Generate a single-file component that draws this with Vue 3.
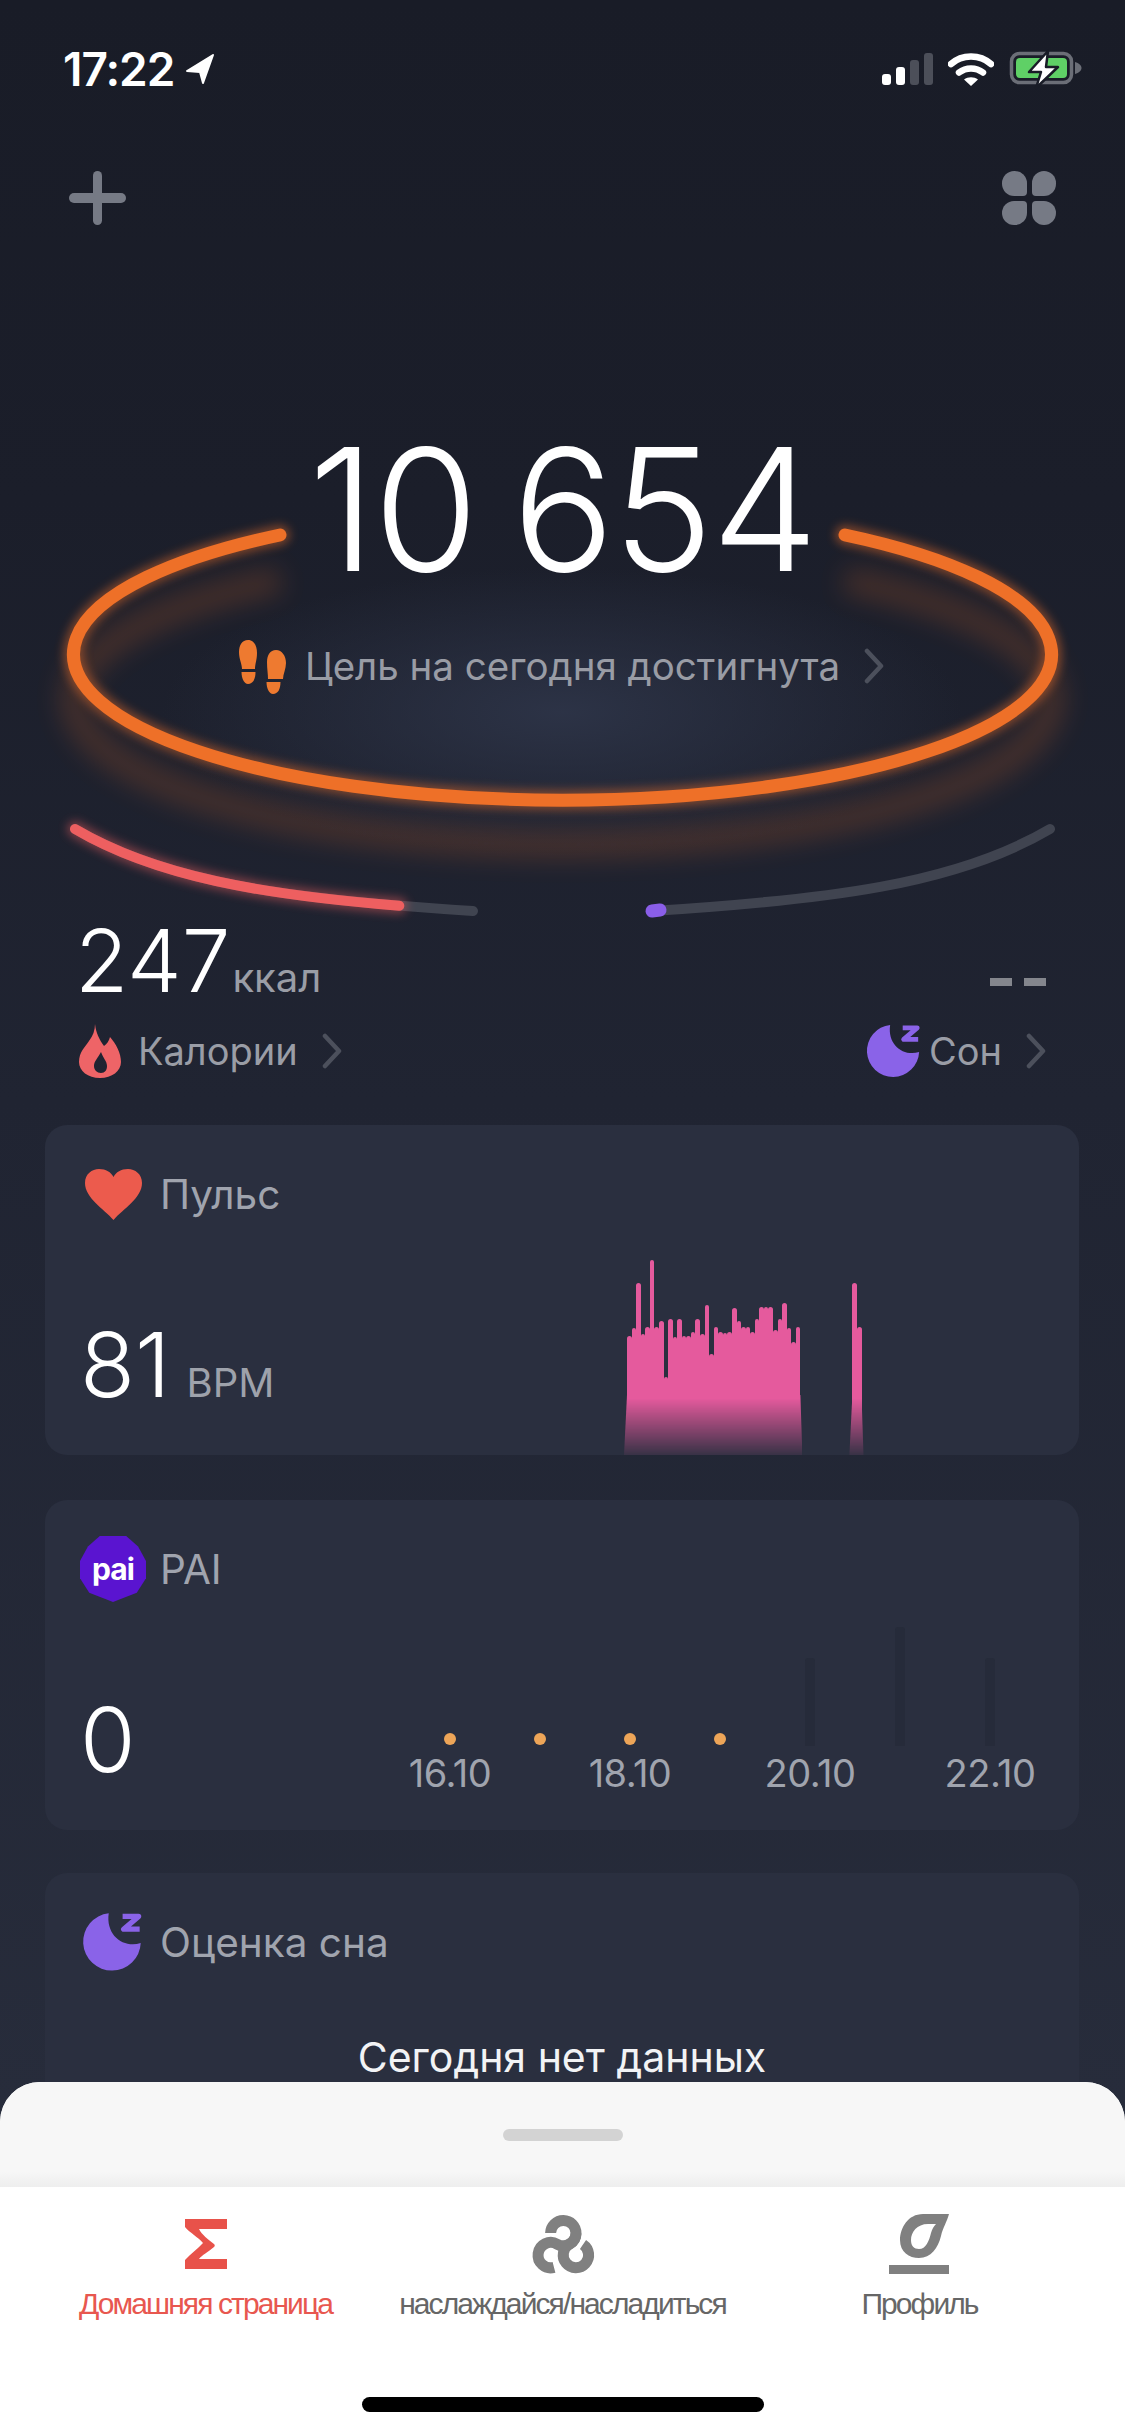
<template>
  <div class="phone">
    <div class="status">
      <div class="status-left">
        <span class="time">17:22</span>
        <svg class="loc" viewBox="0 0 30 32"><path d="M28 2 2 18l13 1 3 11z" fill="#fff" stroke="#fff" stroke-width="2" stroke-linejoin="round"/></svg>
      </div>
      <div class="status-right">
        <div class="signal">
          <i class="on" style="height:11px"></i>
          <i class="on" style="height:18px"></i>
          <i style="height:25px"></i>
          <i style="height:32px"></i>
        </div>
        <svg class="wifi" viewBox="0 0 46 34">
          <path d="M3 12C14 2 32 2 43 12" fill="none" stroke="#fff" stroke-width="6.5" stroke-linecap="round"/>
          <path d="M11 20.5C18 15 28 15 35 20.5" fill="none" stroke="#fff" stroke-width="6.5" stroke-linecap="round"/>
          <path d="M16 27.5C20 24.5 26 24.5 30 27.5L23 34z" fill="#fff"/>
        </svg>
        <svg class="battery" viewBox="1008 48 76 42">
          <rect x="1011.5" y="53.5" width="60" height="29" rx="8" fill="none" stroke="#6b6e77" stroke-width="3.5"/>
          <path d="M1075 62c4 1 6.5 3.5 6.5 6s-2.5 5-6.5 6z" fill="#6b6e77"/>
          <rect x="1016" y="58" width="51" height="20" rx="4" fill="#5fd066"/>
          <path d="m1048 51-19 21h12l-5 16 22-21h-12z" fill="#fff" stroke="#191c27" stroke-width="2.5" stroke-linejoin="round"/>
        </svg>
      </div>
    </div>

    <div class="topbar">
      <div class="plus"></div>
      <div class="clover"><span></span><span></span><span></span><span></span></div>
    </div>

    <section class="hero">
      <svg class="rings" viewBox="0 225 1125 900" width="1125" height="900">
        <defs>
          <radialGradient id="centerGlow">
            <stop offset="0" stop-color="#2e3549" stop-opacity=".9"/>
            <stop offset="1" stop-color="#2e3549" stop-opacity="0"/>
          </radialGradient>
          <filter id="blur4" x="-10%" y="-30%" width="120%" height="160%"><feGaussianBlur stdDeviation="5"/></filter>
          <filter id="blur14" x="-10%" y="-30%" width="120%" height="160%"><feGaussianBlur stdDeviation="13"/></filter>
        </defs>
        <ellipse cx="562" cy="712" rx="400" ry="145" fill="url(#centerGlow)"/>
        <path :d="ringShifted" fill="none" stroke="#ee7028" stroke-width="26" opacity=".2" filter="url(#blur14)"/>
        <path :d="ring" fill="none" stroke="#f0702a" stroke-width="20" stroke-linecap="round" opacity=".45" filter="url(#blur4)"/>
        <path :d="ring" fill="none" stroke="#ee7028" stroke-width="13" stroke-linecap="round"/>

        <path :d="leftArc" fill="none" stroke="#404450" stroke-width="10" stroke-linecap="round"/>
        <path :d="leftArc" pathLength="100" stroke-dasharray="82 200" fill="none" stroke="#ee5f60" stroke-width="16" stroke-linecap="round" opacity=".45" filter="url(#blur4)"/>
        <path :d="leftArc" pathLength="100" stroke-dasharray="82 200" fill="none" stroke="#ee5f60" stroke-width="10" stroke-linecap="round"/>
        <path :d="rightArc" fill="none" stroke="#404450" stroke-width="10" stroke-linecap="round"/>
        <path d="M652 911 660 910" fill="none" stroke="#8a5ee8" stroke-width="13" stroke-linecap="round"/>
      </svg>

      <div class="steps">10 654</div>
      <div class="goal">
        <svg class="feet" viewBox="0 0 70 70">
          <path d="M19 9c6 0 9 6 9 13s-2 11-2 16H13c0-5-3-10-3-17S13 9 19 9z" fill="#ee7a30"/>
          <path d="M12.5 41h14c0 7-2.5 12-7.5 12-4 0-6.5-6-6.5-12z" fill="#ee7a30"/>
          <path d="M47 19c6 0 10 6 10 13 0 6-3 11-3 16H39c0-5-1-10-1-17s3-12 9-12z" fill="#ee7a30"/>
          <path d="M37.5 51h14c0 7-2.5 12-7.5 12-4 0-6.500-6-6.500-12z" fill="#ee7a30"/>
        </svg>
        <span class="goal-text">Цель на сегодня достигнута</span>
        <svg class="chev" viewBox="0 0 20 36"><path d="m3 3 14 15L3 33" /></svg>
      </div>

      <div class="stats">
        <div class="stat">
          <div class="stat-val"><span class="big">247</span><span class="unit">ккал</span></div>
          <div class="stat-label stat-label-left">
            <svg class="flame" viewBox="20 2 45 56"><path fill-rule="evenodd" fill="#ee6467" d="M37 3c1 9 4 15 9 22 3-2 5-5 6-9 6 7 11 16 11 25 0 9-9 16-21 16s-21-7-21-16c0-10 6-15 10-21 4-5 6-11 6-17zM43 31c-3 6-7 9-7 14 0 4 3 7 7 7s6-3 6-7c0-5-4-8-6-14z"/></svg>
            <span>Калории</span>
            <svg class="chev" viewBox="0 0 20 36"><path d="m3 3 14 15L3 33" /></svg>
          </div>
        </div>
        <div class="stat stat-right">
          <div class="dashes"><i></i><i></i></div>
          <div class="stat-label">
            <svg class="moon" viewBox="5 6 60 60">
              <path fill="#8a63e8" d="M31 9a27 27 0 1 0 30 28C45 42 28 30 31 9z"/>
              <path fill="none" stroke="#8a63e8" stroke-width="5" stroke-linejoin="round" d="M44 12h15L45 24h15"/>
            </svg>
            <span>Сон</span>
            <svg class="chev" viewBox="0 0 20 36"><path d="m3 3 14 15L3 33" /></svg>
          </div>
        </div>
      </div>
    </section>

    <section class="cards">
      <div class="card card-pulse">
        <div class="card-head">
          <div class="card-icon">
            <svg class="heart" viewBox="0 0 59 52"><path fill="#ec5b4d" d="M29.5 52C20 41 1 30 1 15 1 6 8 1 15 1c7 0 12 3 14.5 8C32 4 37 1 44 1c7 0 14 5 14 14 0 15-19 26-28.500 37z"/></svg>
          </div>
          <span>Пульс</span>
        </div>
        <div class="card-value"><span class="big">81</span><span class="unit">BPM</span></div>
        <div class="hr-chart">
          <div class="hr-group">
            <i v-for="(top, i) in pulseMain" :key="i" :style="{ height: barHeight(top) + 'px' }"></i>
          </div>
          <div class="hr-group hr-second">
            <i v-for="(top, i) in pulseLate" :key="i" :style="{ height: barHeight(top) + 'px' }"></i>
          </div>
        </div>
      </div>

      <div class="card card-pai">
        <div class="card-head">
          <div class="card-icon"><div class="pai-badge">pai</div></div>
          <span>PAI</span>
        </div>
        <div class="card-value"><span class="big">0</span></div>
        <div class="pai-chart">
          <div v-for="col in paiDays" :key="col.id" class="pai-col">
            <div class="pai-plot">
              <i v-if="col.bar" class="pai-bar" :style="{ height: col.bar + 'px' }"></i>
              <i v-else class="pai-dot"></i>
            </div>
            <div class="pai-label">{{ col.label }}</div>
          </div>
        </div>
      </div>

      <div class="card card-sleep">
        <div class="card-head">
          <div class="card-icon">
            <svg class="moon-lg" viewBox="5 6 60 60">
              <path fill="#8a63e8" d="M31 9a27 27 0 1 0 30 28C45 42 28 30 31 9z"/>
              <path fill="none" stroke="#8a63e8" stroke-width="5" stroke-linejoin="round" d="M44 12h15L45 24h15"/>
            </svg>
          </div>
          <span>Оценка сна</span>
        </div>
        <div class="no-data">Сегодня нет данных</div>
      </div>
    </section>

    <div class="sheet">
      <div class="sheet-top"><div class="handle"></div></div>
      <nav class="tabs">
        <div class="tab active">
          <svg viewBox="185 2219 42 50" style="width:42px;height:50px"><path fill="#e8524a" d="M185 2219h42v10h-28c3 6 9 10 15 15 1 1 1 2 0 3-6 5-12 8-15 12h28v10h-42v-9c5-6 13-11 18-17-5-6-13-10-18-16z"/></svg>
          <span>Домашняя страница</span>
        </div>
        <div class="tab">
          <svg viewBox="-2 -1 80 80" style="width:80px;height:80px;margin:-10px">
            <g fill="none" stroke="#808080" stroke-width="11">
              <path d="M25.600 28A12.700 12.700 0 0 1 51 28.300 12.700 12.700 0 0 1 44.400 39.150 12.700 12.700 0 1 0 58 39.500"/>
              <path d="M29 62.400A12.700 12.700 0 1 1 32.150 39.150 12.700 12.700 0 0 0 51 28.300"/>
            </g>
          </svg>
          <span>наслаждайся/насладиться</span>
        </div>
        <div class="tab">
          <svg viewBox="891 2214 62 60" style="width:62px;height:60px">
            <path fill="#808080" fill-rule="evenodd" d="M951 2214h-26c-15 0-23 14-23 26 0 12 9 18 19 18 12 0 19-10 22-22 2-9 6-14 8-22zM930 2224c-11 0-17 8-17 16 0 6 3 9 8 9 7 0 10-8 12-16 1-4 3-7 5-9z"/>
            <rect x="891" y="2265" width="60" height="9" fill="#808080"/>
          </svg>
          <span>Профиль</span>
        </div>
      </nav>
      <div class="home-bar"></div>
    </div>
  </div>
</template>

<script setup>
const ring = 'M280 535A489 146 0 1 0 845 535'
const ringShifted = 'M280 580A489 146 0 1 0 845 580'
const leftArc = 'M75 829C170 885 300 900 473 911'
const rightArc = 'M1050 829C955 885 825 900 652 911'

// tops read off the chart, in px from the top of the card row
const pulseMain = [116, 108, 63, 114, 107, 40, 107, 101, 157, 99, 117, 99, 116, 116, 112, 99, 114, 85, 134, 107, 112, 113, 112, 88, 101, 107, 107, 112, 99, 87, 87, 87, 110, 99, 83, 108, 122, 107]
const pulseLate = [63, 107]
const barHeight = top => 235 - top

const paiDays = [
  { id: 1, label: '16.10' },
  { id: 2, label: '' },
  { id: 3, label: '18.10' },
  { id: 4, label: '' },
  { id: 5, label: '20.10', bar: 88 },
  { id: 6, bar: 119, label: '' },
  { id: 7, label: '22.10', bar: 88 }
]
</script>

<style>
html, body { margin: 0; background: #191c27; }
</style>

<style scoped>
.phone {
  width: 1125px;
  height: 2436px;
  position: relative;
  overflow: hidden;
  background: linear-gradient(180deg, #191c27 0, #1b1e2a 500px, #202432 1100px, #272c3b 2100px);
  font-family: Inter, "Liberation Sans", sans-serif;
  color: #fff;
}

.status {
  height: 62px;
  padding: 38px 41px 0 63px;
  display: flex;
  justify-content: space-between;
  align-items: center;
}
.status-left { display: flex; align-items: center; gap: 11px; }
.time { font-size: 46px; font-weight: 600; letter-spacing: -1px; line-height: 62px; }
.loc { width: 30px; height: 32px; }
.status-right { display: flex; align-items: center; gap: 15px; }
.signal { display: flex; align-items: flex-end; gap: 5px; height: 32px; }
.signal i { width: 9px; border-radius: 3px; background: #4c4f59; }
.signal i.on { background: #fff; }
.wifi { width: 46px; height: 34px; }
.battery { width: 76px; height: 42px; margin-left: -1px; }

.topbar {
  margin-top: 71px;
  padding: 0 69px;
  display: flex;
  justify-content: space-between;
}
.plus { width: 57px; height: 54px; position: relative; }
.plus::before, .plus::after { content: ""; position: absolute; background: #767a85; border-radius: 5px; }
.plus::before { left: 0; right: 0; top: 22px; height: 10px; }
.plus::after { top: 0; bottom: 0; left: 24px; width: 9px; }
.clover {
  width: 54px;
  height: 54px;
  display: grid;
  grid-template-columns: 1fr 1fr;
  gap: 5px;
}
.clover span { background: #767a85; }
.clover span:nth-child(1) { border-radius: 50% 50% 4px 50%; }
.clover span:nth-child(2) { border-radius: 50% 50% 50% 4px; }
.clover span:nth-child(3) { border-radius: 50% 4px 50% 50%; }
.clover span:nth-child(4) { border-radius: 4px 50% 50% 50%; }

.hero { height: 900px; position: relative; }
.rings { position: absolute; left: 0; top: 0; }

.steps {
  position: relative;
  padding-top: 189px;
  text-align: center;
  font-size: 170px;
  line-height: 190px;
  font-weight: 300;
  letter-spacing: -2px;
  word-spacing: -10px;
}
.goal {
  position: relative;
  margin-top: 27px;
  padding-right: 14px;
  display: flex;
  justify-content: center;
  align-items: center;
  height: 70px;
}
.feet { width: 70px; height: 70px; margin-right: 6px; margin-left: 2px; }
.goal-text { font-size: 38.5px; color: #999ca5; }
.chev { width: 20px; height: 36px; margin-left: 24px; fill: none; stroke: #4c505c; stroke-width: 4.5; stroke-linecap: round; stroke-linejoin: round; }

.stats {
  position: relative;
  margin-top: 214px;
  padding: 0 79px 0 75px;
  display: flex;
  justify-content: space-between;
}
.stat-right { display: flex; flex-direction: column; align-items: flex-end; }
.stat-val { height: 92px; display: flex; align-items: baseline; }
.big { font-size: 87px; line-height: 92px; font-weight: 300; }
.unit { font-size: 40px; color: #9a9da6; margin-left: 2px; }
.dashes { height: 92px; display: flex; gap: 12px; align-items: flex-end; padding-bottom: 21px; box-sizing: border-box; }
.dashes i { width: 22px; height: 8px; background: #84868d; }
.stat-label { display: flex; align-items: center; font-size: 38px; color: #9a9da6; height: 60px; margin-top: 14px; }
.stat-label-left { margin-left: 3px; }
.flame { width: 45px; height: 56px; margin-right: 15px; }
.moon { width: 58px; height: 58px; margin-right: 6px; }
.stat-label .chev { margin-left: 24px; }

.cards {
  position: absolute;
  left: 45px;
  right: 46px;
  top: 1125px;
  display: flex;
  flex-direction: column;
  gap: 45px;
}
.card { position: relative; background: #2a2f3f; border-radius: 22px; height: 330px; }
.card-sleep { height: 500px; margin-top: -2px; }
.card-head {
  position: absolute;
  left: 37px;
  top: 36px;
  height: 66px;
  display: flex;
  align-items: center;
  gap: 16px;
  font-size: 40.5px;
  color: #a0a4ae;
}
.card-icon { width: 62px; display: flex; justify-content: center; }
.card-icon > * { flex: none; }
.heart { width: 59px; height: 52px; }
.moon-lg { width: 64px; height: 64px; }
.card-value { position: absolute; left: 35px; bottom: 44px; display: flex; align-items: baseline; }
.card-value .big { font-size: 90px; }
.card-value .unit { margin-left: 16px; color: #9ea2ab; }

.hr-chart {
  position: absolute;
  left: 579px;
  bottom: 0;
  height: 195px;
  padding: 0 3px;
  display: flex;
  align-items: flex-end;
  -webkit-mask-image: linear-gradient(180deg, #000 71%, rgba(0,0,0,.08) 100%);
  mask-image: linear-gradient(180deg, #000 71%, rgba(0,0,0,.08) 100%);
}
.hr-group { position: relative; display: flex; align-items: flex-end; }
.hr-group::before {
  content: "";
  position: absolute;
  left: -3px;
  right: -2px;
  bottom: 0;
  height: 60px;
  background: #e55a9d;
  clip-path: polygon(3px 0, calc(100% - 2px) 0, 100% 100%, 0 100%);
}
.hr-group i { width: 4.57px; background: #e55a9d; border-radius: 3px 3px 0 0; }
.hr-second { margin-left: 52px; }

.pai-badge {
  width: 66px;
  height: 66px;
  background: #5a14d0;
  clip-path: polygon(30% 0, 70% 0, 88% 16%, 100% 38%, 100% 64%, 86% 86%, 50% 100%, 14% 86%, 0 64%, 0 38%, 12% 16%);
  display: flex;
  align-items: center;
  justify-content: center;
  color: #fff;
  font-size: 30px;
  font-weight: 700;
  letter-spacing: -1px;
}
.pai-chart { position: absolute; left: 360px; top: 126px; display: grid; grid-template-columns: repeat(7, 90px); }
.pai-col { display: flex; flex-direction: column; align-items: center; }
.pai-plot { height: 120px; display: flex; align-items: flex-end; }
.pai-bar { width: 10px; background: #262b3a; border-radius: 3px 3px 0 0; }
.pai-dot { width: 12px; height: 12px; border-radius: 50%; background: #eda558; margin-bottom: 1px; }
.pai-label { height: 52px; line-height: 52px; font-size: 38px; letter-spacing: -.5px; color: #a0a4ae; margin-top: 1px; white-space: nowrap; }

.no-data { position: absolute; top: 154px; left: 0; right: 0; text-align: center; font-size: 41px; line-height: 60px; color: #f2f3f5; }

.sheet {
  position: absolute;
  left: 0;
  right: 0;
  top: 2082px;
  height: 354px;
  border-radius: 40px 40px 0 0;
  overflow: hidden;
  background: #fff;
}
.sheet-top { height: 105px; background: linear-gradient(180deg, #f7f7f7 85%, #eeeeee 100%); }
.handle { position: relative; top: 47px; margin: 0 auto; width: 120px; height: 12px; border-radius: 6px; background: #d3d3d3; }
.tabs { display: grid; grid-template-columns: repeat(3, 357px); padding: 27px 27px 0; }
.tab { height: 120px; display: flex; flex-direction: column; align-items: center; justify-content: flex-start; font-family: "Liberation Sans", Arial, sans-serif; font-size: 30px; letter-spacing: -1.9px; color: #666; white-space: nowrap; }
.tab svg { display: block; height: 60px; }
.tab span { margin-top: 12px; line-height: 36px; }
.tab.active { color: #e8574f; }
.tab.active svg { margin-top: 5px; margin-bottom: 5px; }
.home-bar { position: absolute; left: 362px; top: 315px; width: 402px; height: 15px; border-radius: 8px; background: #000; }
</style>
